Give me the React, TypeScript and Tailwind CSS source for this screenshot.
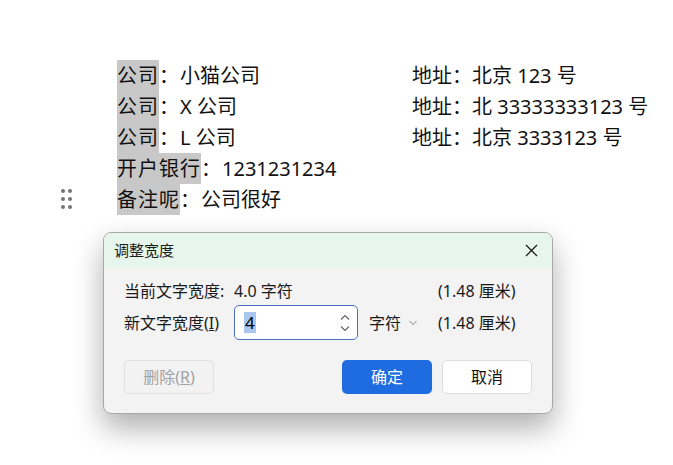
import React from "react";

const font = { fontFamily: '"Noto Sans", "Noto Sans CJK SC", sans-serif' };

const Row: React.FC<{ label: string; value: string; right?: string }> = ({ label, value, right }) => (
  <div className="flex h-[31px] items-center">
    <div className="flex w-[295px] shrink-0">
      <span className="bg-[#c8c8c8] tracking-[1px] leading-[31px]">{label}</span>
      <span className="tracking-[1px] leading-[31px]">：</span>
      <span className="leading-[31px]">{value}</span>
    </div>
    {right && (
      <div className="flex">
        <span className="leading-[31px]">地址：</span>
        <span className="leading-[31px]">{right}</span>
      </div>
    )}
  </div>
);

const App: React.FC = () => {
  return (
    <div className="relative h-[465px] w-[673px] overflow-hidden bg-white text-[#111]" style={font}>
      {/* document text */}
      <div className="relative pl-[117px] pt-[60px] text-[20px]">
        <Row label="公司" value="小猫公司" right="北京 123 号" />
        <Row label="公司" value="X 公司" right="北 33333333123 号" />
        <Row label="公司" value="L 公司" right="北京 3333123 号" />
        <Row label="开户银行" value="1231231234" />
        <Row label="备注呢" value="公司很好" />

        {/* drag handle */}
        <div className="absolute left-[61px] top-[189px] grid grid-cols-2 gap-x-[3.5px] gap-y-[4.5px]">
          {Array.from({ length: 6 }).map((_, i) => (
            <span key={i} className="h-[3.5px] w-[3.5px] rounded-full bg-[#747474]" />
          ))}
        </div>
      </div>

      {/* dialog */}
      <div className="ml-[103px] mt-[17px] w-[450px] overflow-hidden rounded-[8px] border border-[#a8a8a8] bg-[#f3f3f3] shadow-[0_14px_30px_rgba(0,0,0,0.32)]">
        <div className="flex h-[35px] items-center justify-between bg-[#e7f6ec] pl-[10px] pr-[14px]">
          <span className="text-[15px] text-[#1a1a1a]">调整宽度</span>
          <svg width="13" height="13" viewBox="0 0 13 13">
            <path d="M1 1L12 12M12 1L1 12" stroke="#1a1a1a" strokeWidth="1.3" fill="none" />
          </svg>
        </div>

        <div className="px-[20px] pb-[19px] pt-[11px] text-[16px] text-[#1a1a1a]">
          <div className="flex h-[24px] items-center">
            <span className="w-[110px] shrink-0">当前文字宽度:</span>
            <span className="w-[204px] shrink-0">4.0 字符</span>
            <span>(1.48 厘米)</span>
          </div>

          <div className="mt-[2px] flex h-[35px] items-center">
            <span className="w-[110px] shrink-0">
              新文字宽度(<span className="underline">I</span>)
            </span>
            <div className="flex h-[35px] w-[124px] shrink-0 items-center justify-between rounded-[5px] border border-[#4a70c4] bg-white pl-[9px] pr-[6px]">
              <span className="bg-[#a8c6f0] px-[1px] text-[17px] leading-[21px] text-black">4</span>
              <svg width="12" height="24" viewBox="0 0 12 24">
                <path d="M2 8.5L6 4.5L10 8.5" stroke="#606060" strokeWidth="1.1" fill="none" />
                <path d="M2 15.5L6 19.5L10 15.5" stroke="#606060" strokeWidth="1.1" fill="none" />
              </svg>
            </div>
            <div className="ml-[11px] flex w-[69px] shrink-0 items-center">
              <span>字符</span>
              <svg width="10" height="8" viewBox="0 0 10 8" className="ml-[7px]">
                <path d="M1.5 2L5 5.5L8.5 2" stroke="#808080" strokeWidth="1" fill="none" />
              </svg>
            </div>
            <span>(1.48 厘米)</span>
          </div>

          <div className="mt-[20px] flex items-center">
            <button className="flex h-[34px] w-[90px] items-center justify-center rounded-[5px] border border-[#e0e0e0] bg-[#f2f2f2] text-[#a2a2a2]">
              删除(<span className="underline">R</span>)
            </button>
            <button className="ml-auto flex h-[34px] w-[90px] items-center justify-center rounded-[5px] bg-[#1f6ce0] text-white">
              确定
            </button>
            <button className="ml-[10px] flex h-[34px] w-[90px] items-center justify-center rounded-[5px] border border-[#dcdcdc] bg-white text-[#111]">
              取消
            </button>
          </div>
        </div>
      </div>
    </div>
  );
};

export default App;
